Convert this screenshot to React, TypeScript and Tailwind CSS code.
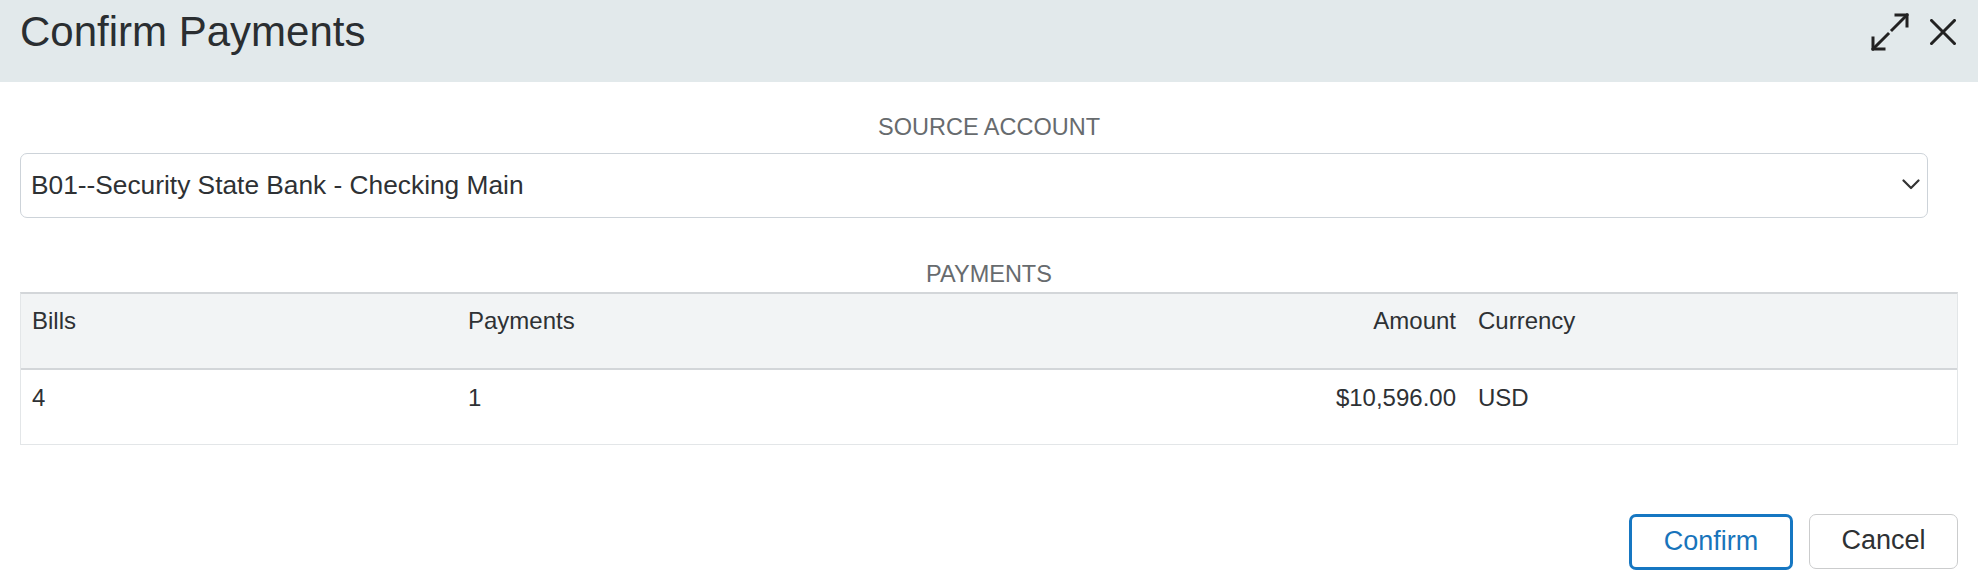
import React from "react";

const font = "font-['Liberation_Sans',Arial,Helvetica,sans-serif]";

function ExpandIcon() {
  return (
    <svg width="38" height="38" viewBox="0 0 38 38" fill="none" stroke="#222" strokeWidth="3" strokeLinecap="square">
      {/* lower-left arrow */}
      <path d="M2 36 L17 21" />
      <path d="M2 25 L2 36 L13 36" />
      {/* upper-right arrow */}
      <path d="M21 17 L36 2" />
      <path d="M25 2 L36 2 L36 13" />
    </svg>
  );
}

function CloseIcon() {
  return (
    <svg width="26" height="26" viewBox="0 0 26 26" fill="none" stroke="#222" strokeWidth="3" strokeLinecap="square">
      <path d="M1.5 1.5 L24.5 24.5" />
      <path d="M24.5 1.5 L1.5 24.5" />
    </svg>
  );
}

function Chevron() {
  return (
    <svg width="18" height="11" viewBox="0 0 18 11" fill="none" stroke="#333" strokeWidth="2.2" strokeLinecap="round" strokeLinejoin="round">
      <path d="M1.5 1.5 L9 9 L16.5 1.5" />
    </svg>
  );
}

const cols = "grid grid-cols-[436px_505px_505px_1fr]";

export default function App() {
  return (
    <div className={`w-[1978px] h-[583px] bg-white ${font}`}>
      <div className="flex h-[82px] items-start justify-between bg-[#e2e9eb] pl-[20px] pr-[22px]">
        <h1 className="pt-[8px] text-[42px] leading-[48px] text-[#2a2e31]">Confirm Payments</h1>
        <div className="flex items-center gap-[21px] pt-[13px]">
          <ExpandIcon />
          <CloseIcon />
        </div>
      </div>

      <div className="px-[20px]">
        <div className="mt-[31px] text-center text-[23.5px] leading-[28px] text-[#676b6e]">SOURCE ACCOUNT</div>
        <div className="mr-[30px] mt-[12px] flex h-[65px] items-center justify-between rounded-[7px] border-[1.5px] border-[#cdd3d9] pb-[2px] pl-[10px] pr-[7px]">
          <span className="text-[26.3px] leading-[32px] text-[#2e3134]">B01--Security State Bank - Checking Main</span>
          <Chevron />
        </div>

        <div className="mt-[42px] text-center text-[23.5px] leading-[28px] text-[#676b6e]">PAYMENTS</div>
        <div className="mt-[4px] border-x border-b border-t-2 border-x-[#e3e6e8] border-b-[#e3e6e8] border-t-[#d3d6d9] text-[24px] leading-[34px] text-[#2e3134]">
          <div className={`${cols} h-[74px] bg-[#f2f4f5]`}>
            <div className="px-[11px] pt-[10px]">Bills</div>
            <div className="px-[11px] pt-[10px]">Payments</div>
            <div className="px-[11px] pt-[10px] text-right">Amount</div>
            <div className="px-[11px] pt-[10px]">Currency</div>
          </div>
          <div className={`${cols} h-[76px] border-t-2 border-[#d3d6d9]`}>
            <div className="px-[11px] pt-[11px]">4</div>
            <div className="px-[11px] pt-[11px]">1</div>
            <div className="px-[11px] pt-[11px] text-right">$10,596.00</div>
            <div className="px-[11px] pt-[11px]">USD</div>
          </div>
        </div>

        <div className="mt-[69px] flex justify-end gap-[16px]">
          <button className="h-[56px] w-[164px] rounded-[7px] border-[3px] border-[#1677c2] bg-white pb-[2px] text-[27px] text-[#1874bb]">
            Confirm
          </button>
          <button className="h-[55px] w-[149px] rounded-[7px] border-[1.5px] border-[#cbcccd] bg-white pb-[2px] text-[27px] text-[#2e3134]">
            Cancel
          </button>
        </div>
      </div>
    </div>
  );
}
